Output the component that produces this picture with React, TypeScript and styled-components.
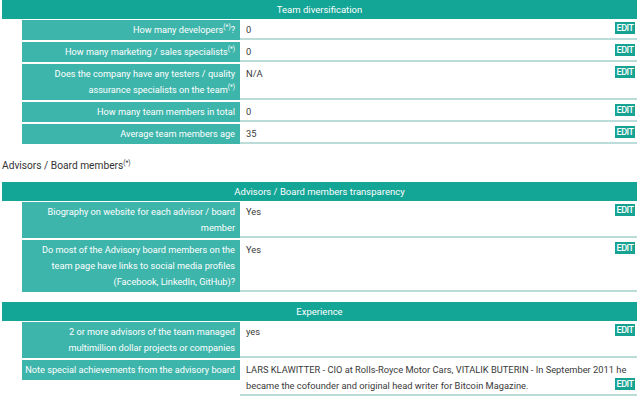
import React from "react";
import styled, { createGlobalStyle } from "styled-components";

const GlobalStyle = createGlobalStyle`
  body {
    margin: 0;
    background: #ffffff;
    font-family: Roboto, "Liberation Sans", Arial, sans-serif;
    color: #333333;
  }
`;

const Page = styled.div`
  padding: 0 3px 0 2px;
`;

const Section = styled.section<{ gap?: number }>`
  margin-bottom: ${(props) => props.gap ?? 0}px;
`;

const SectionHeader = styled.div`
  background: #13a596;
  color: #ffffff;
  font-size: 9.5px;
  text-align: center;
  height: 19px;
  line-height: 19px;
`;

const Rows = styled.div`
  padding: 1px 0 0 20px;
`;

const Row = styled.div`
  display: flex;
  margin-bottom: 2px;
`;

const Label = styled.div`
  align-self: flex-start;
  flex: 0 0 218px;
  box-sizing: border-box;
  background: #3db5ab;
  color: #ffffff;
  font-size: 9.2px;
  line-height: 16px;
  text-align: right;
  padding: 2px 5px 2px 2px;
`;

const Value = styled.div`
  flex: 1;
  box-sizing: border-box;
  font-size: 9.3px;
  line-height: 16px;
  padding: 2px 2px 0 6px;
  border-bottom: 2px solid #bcdcd9;
  color: #3a3a3a;
`;

const EditButton = styled.button`
  float: right;
  border: none;
  margin: 0;
  background: #17a393;
  color: #ffffff;
  font-family: Roboto, "Liberation Sans", Arial, sans-serif;
  font-size: 9px;
  font-weight: 500;
  letter-spacing: -0.5px;
  height: 12px;
  line-height: 12px;
  padding: 0;
  width: 20px;
  text-align: center;
  cursor: pointer;
`;

const Mark = styled.sup`
  font-size: 6.5px;
  line-height: 0;
  vertical-align: 4px;
`;

const Heading = styled.h3`
  margin: 14px 0 8px;
  font-size: 10.2px;
  font-weight: 400;
  color: #333333;
  line-height: 16px;
`;

type Item = { label: React.ReactNode; value: string };

const team: Item[] = [
  { label: <>How many developers<Mark>(*)</Mark>?</>, value: "0" },
  { label: <>How many marketing / sales specialists<Mark>(*)</Mark></>, value: "0" },
  {
    label: (
      <>
        Does the company have any testers / quality assurance specialists on the team
        <Mark>(*)</Mark>
      </>
    ),
    value: "N/A",
  },
  { label: "How many team members in total", value: "0" },
  { label: "Average team members age", value: "35" },
];

const advisors: Item[] = [
  { label: "Biography on website for each advisor / board member", value: "Yes" },
  {
    label:
      "Do most of the Advisory board members on the team page have links to social media profiles (Facebook, LinkedIn, GitHub)?",
    value: "Yes",
  },
];

const experience: Item[] = [
  {
    label: "2 or more advisors of the team managed multimillion dollar projects or companies",
    value: "yes",
  },
  {
    label: "Note special achievements from the advisory board",
    value:
      "LARS KLAWITTER - CIO at Rolls-Royce Motor Cars, VITALIK BUTERIN - In September 2011 he became the cofounder and original head writer for Bitcoin Magazine.",
  },
];

function Table({ title, items }: { title: string; items: Item[] }) {
  return (
    <>
      <SectionHeader>{title}</SectionHeader>
      <Rows>
        {items.map((item, i) => (
          <Row key={i}>
            <Label>{item.label}</Label>
            <Value>
              {item.value}
              <EditButton>EDIT</EditButton>
            </Value>
          </Row>
        ))}
      </Rows>
    </>
  );
}

export default function App() {
  return (
    <Page>
      <GlobalStyle />
      <Section>
        <Table title="Team diversification" items={team} />
      </Section>
      <Heading>
        Advisors / Board members<Mark>(*)</Mark>
      </Heading>
      <Section gap={10}>
        <Table title="Advisors / Board members transparency" items={advisors} />
      </Section>
      <Section>
        <Table title="Experience" items={experience} />
      </Section>
    </Page>
  );
}
